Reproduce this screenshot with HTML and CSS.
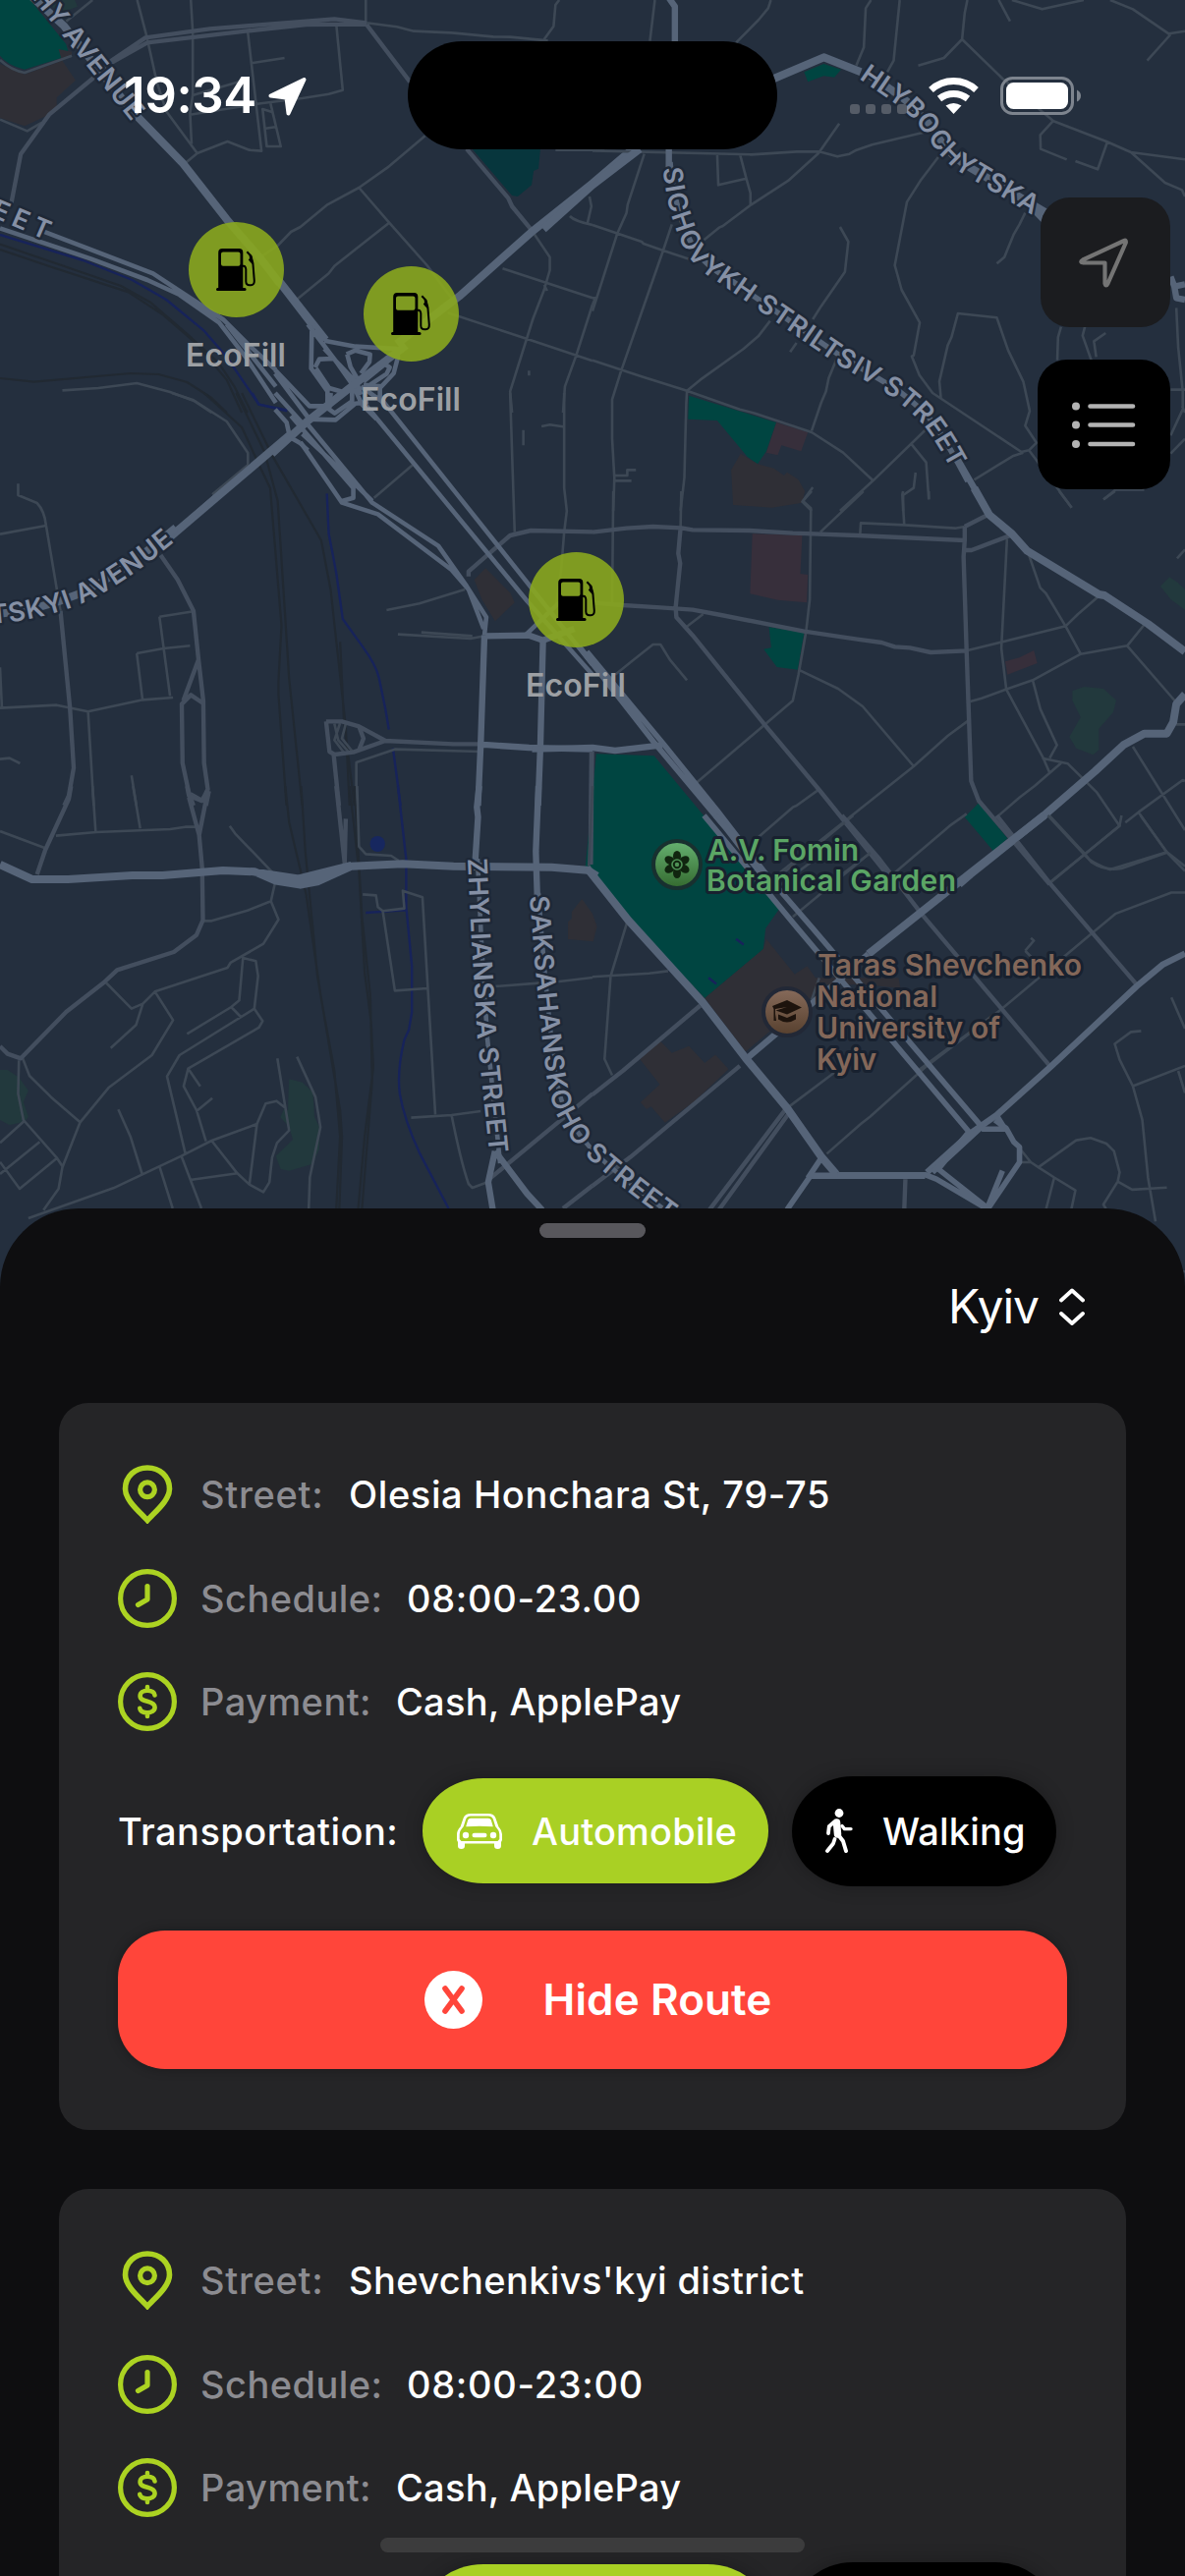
FILE: index.html
```html
<!DOCTYPE html>
<html lang="en">
<head>
<meta charset="utf-8">
<title>EcoFill</title>
<link rel="stylesheet" href="styles.css">
</head>
<body>
<svg width="0" height="0" class="defs">
  <defs>
    <symbol id="pump" viewBox="0 0 40 43">
      <path fill-rule="evenodd" d="M2.2 4Q2.2 0 6.2 0H23.5Q27.3 0 27.3 4V40H29Q30.6 40 30.6 41.5T29 43H1.5Q0 43 0 41.5T1.5 40H2.2ZM7 3.4Q5 3.4 5 5.4V15.7Q5 17.7 7 17.7H22.5Q24.5 17.7 24.5 15.7V5.4Q24.5 3.4 22.5 3.4Z"/>
      <path d="M27 17.8H28Q30 18 30.3 21V33.500Q30.400 37.200 34 37.200H35.300Q39 37.200 38.800 32.500L37.400 15L35.400 7.500L31.300 3.200" fill="none" stroke="#000" stroke-width="2"/>
      <path d="M33.500 5.500L36.500 8L38 17L34.500 13.500L32.800 11.500L34 10Z"/>
    </symbol>
    <symbol id="spot" viewBox="0 0 60 60">
      <g fill="none" stroke="#acd322" stroke-width="5.600"><path d="M30 56.500C23 48.500 7.500 36.500 7.500 24.500C7.500 11.500 17.500 3 30 3S52.500 11.500 52.500 24.500C52.500 36.500 37 48.500 30 56.500Z"/><circle cx="30" cy="25.300" r="7.400" stroke-width="5.200"/></g>
    </symbol>
    <symbol id="clock" viewBox="0 0 60 60">
      <g fill="none" stroke="#acd322" stroke-width="5.200" stroke-linecap="round" stroke-linejoin="round"><circle cx="30" cy="30" r="27.400"/><path d="M30 17.500V31L20.500 36.500"/></g>
    </symbol>
    <symbol id="dollar" viewBox="0 0 60 60">
      <g fill="none" stroke="#acd322" stroke-width="5.200" stroke-linecap="round" stroke-linejoin="round"><circle cx="30" cy="30" r="27.400"/><path d="M37.500 23.500C37 20 33.500 18.800 30 18.800C26 18.800 22.600 20.800 22.600 24.200C22.600 27.800 26 28.700 30 29.700S37.600 32 37.600 35.800C37.600 39.500 34 41.200 30 41.200S22.800 40 22.300 36.800M30 15V18M30 42V45" stroke-width="4.600"/></g>
    </symbol>
    <symbol id="car" viewBox="0 0 46 36">
      <path fill="#fff" fill-rule="evenodd" d="M14 0H32Q37.500 0 39.200 4L42.500 13.500Q46 17 46 21V27L45 29V33Q45 36 41.500 36T38 33V30.500H8V33Q8 36 4.500 36T1 33V29L0 27V21Q0 17 3.500 13.500L6.800 4Q8.500 0 14 0ZM14 2.500Q10.500 2.500 9.200 5.500L6.800 13L4.500 16Q2.700 18 2.700 21V26L4.500 28H41.500L43.300 26V21Q43.300 18 41.500 16L39.200 13L36.800 5.500Q35.500 2.500 32 2.500Z"/>
      <path fill="#fff" d="M14 4.800H32Q34 4.800 34.800 6.500L36.800 13.200Q23 12.200 9.200 13.200L11.200 6.500Q12 4.800 14 4.800Z"/><circle cx="9" cy="22" r="3.200" fill="#fff"/><circle cx="37" cy="22" r="3.200" fill="#fff"/><rect x="15.500" y="19.700" width="15" height="4.600" rx="2.300" fill="#fff"/>
    </symbol>
    <symbol id="walk" viewBox="0 0 28 45">
      <g stroke="#fff" stroke-linecap="round" stroke-linejoin="round" fill="none"><circle cx="14" cy="4.500" r="4.400" fill="#fff" stroke="none"/><path d="M11.500 14L12.500 26" stroke-width="7.500"/><path d="M9 13.500L3.800 18L3 25" stroke-width="3.800"/><path d="M13 26.500L18 33L21 43" stroke-width="4"/><path d="M9.500 31L8 35.500L2 43" stroke-width="3.800"/><path d="M17 17.500L19.500 20.600H26" stroke-width="3.400"/></g>
    </symbol>
    <linearGradient id="leaf" x2="0" y2="1"><stop stop-color="#66b171"/><stop offset="1" stop-color="#34692f"/></linearGradient>
    <linearGradient id="clay" x2="0" y2="1"><stop stop-color="#876b5b"/><stop offset="1" stop-color="#57402e"/></linearGradient>
    <path id="lane-hly" d="M874 80L912 106Q932 122 945 141Q958 162 975 174L1066 228"/>
    <path id="lane-sich" d="M675 171Q678 213 694 248Q703 272 735 290L848 368L905 402Q932 422 944 438Q957 456 978 496"/>
    <path id="lane-tsk" d="M-9 635Q40 632 84 614Q125 596 184 546"/>
    <path id="lane-ave" d="M32 -3L142 134"/>
    <path id="lane-eet" d="M-10 220L64 252"/>
    <path id="lane-zhy" d="M476 874L480 960L486 1057L499 1184"/>
    <path id="lane-sak" d="M539 912Q546 1010 555 1085C560 1135 576 1155 600 1180Q640 1216 710 1265"/>
  </defs>
</svg>

<main class="screen">
  <svg class="map" viewBox="0 0 1206 1420" width="1206" height="1420">
    <rect width="1206" height="1420" fill="#242f3e"/>

    <!-- north-west -->
    <g class="tile" transform="matrix(.38457 0 0 .33333 0 0)">
      <path class="teal" d="M0 0H80L175 135L180 155L160 178L65 212Q20 200 0 170Z"/>
      <path class="brown" d="M0 195L65 227L165 185L200 245L150 298V340L65 385L0 360ZM155 150L190 158V170L162 178Z"/>
      <path class="moss" d="M115 0H198L205 20L160 40Z"/>
      <path class="pine" d="M1250 455H1430L1425 515L1412 522L1407 565L1370 600L1355 597Z"/>
      <path class="rail" d="M0 746L140 801L320 873L400 925L500 1025L580 1110L620 1180L655 1260M0 762L140 817L340 892L430 960L520 1050L600 1160L640 1260M0 1155L90 1166L345 1140L420 1143L495 1167L560 1215L600 1260"/>
      <path class="river" d="M0 717L220 795L350 855L440 915L540 1010L600 1090L685 1235L760 1255"/>
      <path class="minor" d="M363 0L388 110L415 250L440 340L522 468L485 503M505 0L510 95V290L503 345L507 440M522 468L602 432L660 458L692 461L655 90M665 193L753 177M512 290L632 250M503 350L690 316L800 300L870 287L907 275L890 75M716 316L743 447H706L695 333L720 342M703 392L728 388M968 70V0M970 70L1050 82L1095 95L1195 100L1305 112L1350 113L1450 124M1440 120L1465 80L1470 15L1480 0M1125 415L1025 512L950 573L865 626L795 693L770 708L735 750L690 785M950 573L1030 680L1130 810L1195 910M1030 680L885 812L870 835L785 915M245 0L175 65M0 183Q30 215 65 222L190 170M0 365L72 400L110 375M1330 820L1568 910M1185 955L1395 1035L1568 1102M1405 700L1455 785V825L1440 885L1410 975L1350 1195L1355 1260M1568 930L1525 1085L1495 1180L1490 1260M1400 1132V1147M1440 870L1448 888M1508 660Q1520 675 1568 687M1560 600L1565 630L1555 680M165 1192L260 1185L362 1170L450 1197L515 1225L560 1260M1470 458H1600"/>
      <path class="mid" d="M282 195L385 115L555 88L885 58L970 70M282 200L390 130L650 95L810 75L970 74M282 200L245 240L130 350L55 470L30 620M970 75L1085 250M1235 455L1345 605L1355 630L1405 700"/>
      <path class="main w8" d="M75 -20L170 80L350 340L485 500L600 670L690 790L740 865"/>
      <path class="main" d="M730 855L830 1005M742 855L865 1035"/>
      <path class="main w9" d="M1700 430L1568 560L1405 710L1215 905L1050 1050"/>
      <path class="main" d="M0 697L240 790L390 855L475 900L580 985L650 1090L730 1230M100 700L405 835L510 915L590 975L655 1050L730 1130M600 990L730 1180"/>
    </g>

    <!-- north-east -->
    <g class="tile" transform="matrix(.38457 0 0 .33333 603 0)">
      <path class="teal" d="M560 220L612 195L658 212L640 236L612 232L570 250ZM255 1208L486 1290L460 1378L437 1417L410 1395L330 1284L253 1280Z"/>
      <path class="plum" d="M487 1290L570 1320L552 1378L500 1360L490 1390L460 1382Z"/>
      <path class="brown" d="M392 1385L437 1417L480 1430L507 1452L515 1442L545 1465L562 1500L555 1535L475 1550L372 1542L367 1435Z"/>
      <path class="minor" d="M165 0L152 125M472 0L465 25L440 60L380 130M737 0L723 25L718 145L698 200M813 0L797 185L780 220M992 0L985 40L978 120L930 177L862 200M978 120L1085 240L1220 370L1360 432L1425 465L1568 487M1075 0L1105 65M1110 0L1190 28L1300 0M1370 0L1430 28L1525 103L1568 95M1530 105L1468 185M1425 465L1515 558L1560 580L1568 600M1220 368L1185 412L1186 455L1255 487M1362 435L1337 517L1278 492M0 460L420 472L540 463L600 463L648 478L680 470L695 460L740 442L885 402M653 377L598 468L520 550L420 625L345 690L335 695L295 733M330 470L333 565L407 545L390 470M407 545L418 590V625M137 470L93 625L90 650L65 715L25 860L0 950M210 685L187 765L75 1135L52 1220V1340L58 1460L55 1560M0 687L130 738L135 744L187 765L260 793M915 480L870 548L832 617L800 810L818 885L866 985L850 1085L845 1088L865 1145L900 1200L1135 1380L1155 1375L1175 1352L1145 1300L1157 1255L1140 1165L1100 1070L1070 970L967 957L950 1030L940 1055L918 1165L922 1215M655 693L677 738L668 830L605 935L583 975M470 980L440 1025L400 1065L285 1160L250 1193L248 1235L243 1460L233 1560M0 1100L130 1150L250 1193L390 1250L430 1262L580 1320L663 1382L742 1467M540 1047L523 1075M650 1085L625 1155L618 1195L605 1230L580 1315M888 1305L745 1465L655 1560M843 1355L883 1412L890 1525M855 1443L850 1490L822 1512V1560M1010 1465L1112 1393L1140 1382M1155 1375L1230 1490L1268 1550M1145 650L1130 685L1115 715L1090 785L1070 805M1240 998L1232 1030L1230 1100M1303 998L1297 1025L1320 1100M1358 1017L1327 1042L1333 1090M1545 940L1550 1060L1562 1195V1250L1530 1330M1530 1190H1568M1560 1240L1568 1260M1530 1385L1568 1340M1353 1525L1385 1495H1460M60 1452H92V1435H115M60 1468H103M583 1488L555 1532L580 1560M0 910H8L0 930"/>
      <path class="main w7" d="M200 -10L218 20V130M202 455V515M965 1400L1050 1570"/>
      <path class="main w9" d="M480 240L612 175L710 220M-130 700L0 565L125 455M1170 640L1195 670"/>
      <path class="main w7" d="M1530 845L1540 875L1568 868M1540 875L1545 910L1568 915"/>
    </g>

    <!-- west -->
    <g class="tile" transform="matrix(.38457 0 0 .33333 0 400)">
      <path class="brown" d="M1285 535L1255 570L1275 630L1310 697L1362 640L1350 610Z"/>
      <path class="rail" d="M540 0L640 105L690 230L715 290L745 710L737 880V920L758 1260M625 0L700 180L735 330L765 870L800 1260M640 0L720 190L850 450L875 600L915 1020L925 1260M900 760L910 1000L938 1260"/>
      <path class="river" d="M668 0L685 35L760 52M865 307L870 430L890 550L907 690L960 775Q995 830 1003 870L1020 965L1029 1028M1040 1085L1060 1260"/>
      <path class="minor" d="M455 0L512 22L600 87L656 183V220L562 310M48 277V312L98 336Q118 360 122 405L160 665M0 431L122 405M422 683L512 667M422 683L450 925M362 795L433 780L503 772M362 795L377 935M0 962L150 953L233 973L378 937L458 930M233 973L240 1105L248 1260M0 838L5 960M0 1118L25 1115L53 1131M348 1168L361 1260M990 320L1092 220M1023 663L1110 643L1230 600M1053 737L1245 750L1283 742M1115 731L1250 742M1350 0L1355 180L1362 425M1493 0V290L1500 360L1493 425L1485 540L1470 660M1433 102L1455 97L1490 103M1385 113V160M943 1260V1128L1045 1088L1270 1095M885 1010L895 1060L922 1095M900 1008L885 1060L910 1098M915 1010L905 1055L935 1098"/>
      <path class="mid" d="M425 495L470 570L512 665L525 810L538 940L540 1130L550 1210L535 1245L500 1222L483 1130L481 950L505 922L538 948M525 815L485 940M160 665L185 960L195 1145L182 1230L170 1260M500 1222L512 1260M553 1215L545 1260M863 1003H905L950 1018L1020 1062L1200 1072H1270M863 1003L872 1095L885 1104L935 1097L1020 1062M950 1018L962 1055L950 1090M883 1104L897 1260M1240 560V545L1350 435L1405 420L1568 424"/>
      <path class="main w9" d="M765 130L450 440"/>
      <path class="main" d="M765 130L570 315L450 437M810 90L985 335L1160 467L1235 590L1287 685L1282 740M795 150L905 335L1000 370L1195 540L1240 600L1280 720M770 70L935 290V320L905 330M800 125L870 200L985 330M970 40L1395 635L1568 860M1010 20L1210 310L1568 830M1390 740L1480 640M1440 750L1435 760"/>
      <path class="main w7" d="M1282 740L1272 1075L1265 1260M1285 742L1400 740L1437 755L1430 1080L1424 1260M1437 755L1520 720M1270 1073L1400 1083L1568 1088"/>
    </g>

    <!-- interchange -->
    <g class="tile" transform="matrix(.33333 0 0 .33333 280 330)">
      <path class="main" d="M100 0L240 185M120 0L150 50M112 20L110 135L160 205V250M122 132L135 107L180 105L240 190M125 135L165 195L210 208M150 50L245 68L370 75L375 100L362 150L320 195V230M218 92L245 80L290 92L288 115L262 150M220 92L230 130L250 165M150 75L250 180L262 215M270 175L335 122L350 132L340 152L290 185M170 210L165 260L182 272L235 235V195M100 290L185 292L245 242L285 238M270 185L325 190M0 140L105 250H155L200 212M0 150L112 300M0 210L90 310M0 260L35 300L45 345L75 362M75 362L100 385M240 190L265 245L310 290M262 190L325 235L345 260"/>
      <path class="main w9" d="M400 65L240 185L100 295L-10 395"/>
    </g>

    <!-- east -->
    <g class="tile" transform="matrix(.38457 0 0 .33333 603 500)">
      <path class="plum" d="M423 130L555 135L550 252L570 255L567 340L490 332L417 313ZM1092 520L1130 508L1168 486L1177 525L1098 560Z"/>
      <path class="teal" d="M467 415L560 432L543 545L488 537L453 482L473 478ZM1022 952L1098 1060L1062 1100L985 995ZM10 802L163 808L330 1040L495 1274L458 1335L452 1398L297 1548L-20 1160Z"/>
      <path class="moss" d="M1270 610L1300 597L1352 603L1386 638L1378 675L1340 725V790L1325 805L1280 785L1262 750L1292 690L1270 640ZM1527 262L1550 280L1568 300V362L1530 330L1503 290Z"/>
      <path class="minor" d="M55 0L52 350M235 0L233 110M580 0L557 30L578 52L575 330L565 430L545 560L530 640L275 890M717 0L603 125M708 135L710 97L825 103L960 113L985 108M822 0L820 10L825 103M890 0V25M1235 0L1268 50M1383 0L1352 25M1097 145L1082 480L1095 605L1193 815L1210 860M1155 195L1185 295L1200 312L1252 412L1292 497L1415 472L1545 645M1340 320L1285 375L1252 412L990 487M1460 408L1415 472M1568 178L1547 205M1292 497L1165 577L1090 607L1030 632L1000 642M1165 577L1185 665L1229 775L1210 815M1190 815L1258 832L1335 920L1395 1022L1210 1195M1240 830L1170 900L1130 935L1065 1000M545 545L650 603L715 657L850 840M995 700L940 747L850 840L667 1008L490 1170M60 560L105 518L160 468H180L205 515L250 577M293 375L248 415M600 910L540 960L530 965L440 1055M990 985L945 1022L800 1165M735 1105L660 1170M1205 985L1305 1110L1320 1132Q1355 1160 1400 1152L1520 1103M1430 780L1568 1035M1410 1012L1445 980L1562 882L1568 885M1445 980L1520 1103L1568 1160M1545 712H1568"/>
      <path class="mid" d="M0 125L90 113L160 108L235 112L265 118L415 120L530 128L700 135L985 150M233 112L227 190L232 220L220 355L222 385L265 440L455 712L600 912L667 1008L800 1200M985 108V150L982 200L990 490L1002 885L1022 945L1210 1200M985 180H1003L1110 133M985 108L1050 70M0 340L80 348L180 355L265 362L340 378L560 428L700 452L765 462L800 475L840 478L895 492L990 487"/>
      <path class="main w9" d="M1010 -10L1050 72L1110 130L1150 182L1340 315L1355 318L1470 405L1568 490M1568 620L1545 650L1537 705L1520 740H1460L1405 775L1330 855L1200 985L1000 1170L970 1200"/>
      <path class="main w55" d="M-35 475L165 770L350 1025L460 1190M-15 490L190 775L330 975L480 1200"/>
      <path class="main w7" d="M-160 788L0 783L60 792L185 775"/>
      <path class="main w5" d="M-2 795L-5 1140"/>
    </g>

    <!-- south-west -->
    <g class="tile" transform="matrix(.38457 0 0 .33333 0 800)">
      <path class="moss" d="M0 867H20L50 890L75 930L62 965L75 1010L65 1025L25 1035L0 1020ZM765 895L800 905L828 935L832 1010L845 1040V1110L825 1155L765 1175L743 1170L730 1130L775 1080L765 1040L742 1012L752 985L762 990Z"/>
      <path class="brown" d="M1540 345L1513 385V405L1503 415V468L1570 475L1580 430L1568 390Z"/>
      <path class="rail" d="M755 0L765 110L810 330L850 650L885 870L900 1070L890 1290M797 0L808 200L840 580L900 990L905 1070L898 1290M925 0L950 260L965 570L982 720L988 860L965 1070L948 1290M938 0L958 400L980 640L985 900L958 1290"/>
      <path class="river" d="M1053 0L1075 225V370L1090 550V690L1082 745L1070 775Q1050 870 1058 940Q1070 1020 1110 1120L1187 1290M968 387L1073 379"/>
      <ellipse cx="999" cy="177" rx="20" ry="24" fill="#17275f"/>
      <path class="minor" d="M245 0L253 138M352 0L371 130M148 152L255 141L450 132L490 125H525M0 138L118 189M608 122L622 145L722 265M727 300L717 352L737 408L697 482L610 540L602 555L410 628L458 715L402 822L287 922L212 1027L165 1165L155 1230L115 1295M717 352L655 380L560 412H540M280 600L348 680L378 665L410 628M378 665L360 730L293 800M643 525L677 535L683 580L673 680L695 718L685 738L498 863L486 917L520 990L545 1085M643 525L633 655L612 675L495 757M612 675L637 705M673 680L475 822L442 887L490 1120M498 863L530 917M520 993L562 953M60 832L78 885L135 950L212 1027M50 838L48 940L62 1020L150 1135L167 1165M62 1025L0 1090M105 1087L0 1185M150 1137L52 1230L0 1148M313 988L345 1070L377 1188M75 1320L300 1228L480 1130L560 1083L680 1032L703 970L732 962L757 985M734 832L765 1052L733 1090L720 1135L713 1210L697 1240L660 1217L680 1032M560 1083L628 1183L660 1217M628 1183L503 1203M480 1130L533 1290M423 1165L457 1290M786 827L835 950L848 1042L820 1195L817 1290M945 0L950 185L968 208L1035 213L1055 228M960 331L995 334L1000 370L1013 382L1070 374L1066 320L1118 340L1152 1003M1013 382L1045 625L1130 618M1088 1013L1195 1005L1272 993M1195 1005Q1220 1150 1240 1215L1250 1227L1285 1212M1310 612L1425 602L1475 598L1568 585M1568 0L1558 245"/>
      <path class="mid" d="M188 0L182 40L120 195L98 270M495 0L500 30L533 45L553 15M500 35L527 150L550 15M527 150L535 250L537 410L520 455L460 507L310 562L275 600L175 690L55 832L20 818L0 795M890 0L912 235M1568 940L1290 1205M1568 1220L1490 1290M915 100L912 240"/>
      <path class="main w8" d="M0 240L85 285H180L350 273H430L590 258L675 262L730 290L795 302L840 292L930 245L1065 238L1200 245L1460 248L1555 257L1580 275M670 262L790 283L930 243"/>
      <path class="main w7" d="M1268 0L1262 65L1265 95L1257 240M1425 0L1418 200L1422 345M1310 1115L1292 1210L1305 1300M1310 1115L1395 1245L1435 1295"/>
    </g>

    <!-- south-east -->
    <g class="tile" transform="matrix(.38457 0 0 .34438 603 830)">
      <path class="brown" d="M460 365L535 470L568 445L590 480L810 480L815 510L720 500L620 500L510 600L405 698L297 540L452 395ZM180 668L210 702L255 682L297 732L325 707L360 750L270 845L192 908L155 860L143 868L127 848L178 795L125 720ZM0 310L10 320L0 375Z"/>
      <path class="river" d="M380 365L400 382M307 480L328 498"/>
      <path class="minor" d="M93 310L48 475L32 720L52 768M0 477L150 467L200 460M690 0L440 230M735 110L530 300M660 70L480 220M1205 0L1305 120Q1320 140 1370 160L1520 108L1568 150M1400 0L1395 30L1210 200M1450 0L1520 108M1568 228H1532L1385 290L1320 350L1085 570L880 745L735 890L710 912L620 1000M600 480L580 545M640 760L515 865M860 755L1060 590M1145 400L1168 370L1160 362M1145 400L1180 440M1532 538L1568 630M1452 637L1425 640L1382 675L1395 722L1430 800L1455 900L1470 1070L1490 1200M1430 800L1568 740M1550 755L1568 820M1135 990L1160 1025L1180 1040L1280 960L1318 953L1360 970L1380 992L1395 1055L1390 1082L1352 1150L1360 1165M1390 1082L1428 1106L1520 1100M1130 1025H1160M1180 1040L1222 1070L1278 1108L1267 1165M1222 1070L1200 1165M1555 1348H1568"/>
      <path class="mid" d="M1070 0L1210 200L1440 500M660 0L760 130L870 290L1210 740M0 825L80 755L285 562M0 1095L100 1010L390 740M510 870L310 1165M520 880L335 1165M828 1075L825 1165"/>
      <path class="main w9" d="M-15 155L95 310L290 550L405 717L515 865L605 1008L645 1060M1195 0L1000 170L730 410"/>
      <path class="main w7" d="M730 410L650 490L410 717M1568 408L1510 440L1440 505L1215 740L1070 885L1000 940L885 1055M575 1065H880"/>
      <path class="main w55" d="M295 0L540 330L1000 940M325 0L580 330L1030 920M575 1068L515 1165M610 1005L570 1072M650 1062H880L910 1075L1040 1160M915 1045L1045 1160M1000 930L915 1045M1030 920L900 1055M1030 927H1092L1070 888M1065 900L1095 925L1115 965L1130 980V1025L1045 1165M1085 1050L1045 1160"/>
    </g>

    <g class="main">
      <use href="#lane-hly" class="w8" transform="translate(6 -7)"/>
      <use href="#lane-sich" class="w55" transform="translate(7 -6)"/>
      <use href="#lane-tsk" class="w8" transform="translate(-5 -9)"/>
      <use href="#lane-zhy" transform="translate(10 0)"/>
      <use href="#lane-sak" transform="translate(9 -3)"/>
    </g>

    <g class="street">
      <text><textPath href="#lane-ave" textLength="163">HY AVENUE</textPath></text>
      <text><textPath href="#lane-eet" textLength="62">EET</textPath></text>
      <text><textPath href="#lane-hly" textLength="227">HLYBOCHYTSKA</textPath></text>
      <text><textPath href="#lane-sich" textLength="443">SICHOVYKH STRILTSIV STREET</textPath></text>
      <text><textPath href="#lane-tsk" textLength="209">TSKYI AVENUE</textPath></text>
      <text><textPath href="#lane-zhy" textLength="301">ZHYLIANSKA STREET</textPath></text>
      <text><textPath href="#lane-sak" textLength="384">SAKSAHANSKOHO STREET</textPath></text>
    </g>

    <g class="poi poi-green">
      <text x="720" y="876" textLength="154">A.V. Fomin</text>
      <text x="719" y="907" textLength="254">Botanical Garden</text>
    </g>
    <circle cx="689" cy="880" r="24" fill="url(#leaf)" stroke="#18302f" stroke-width="4"/>
    <g fill="#10250f" transform="translate(689 880)">
      <ellipse cy="-8.500" rx="4" ry="5.500"/><ellipse cy="-8.500" rx="4" ry="5.500" transform="rotate(60)"/><ellipse cy="-8.500" rx="4" ry="5.500" transform="rotate(120)"/><ellipse cy="-8.500" rx="4" ry="5.500" transform="rotate(180)"/><ellipse cy="-8.500" rx="4" ry="5.500" transform="rotate(240)"/><ellipse cy="-8.500" rx="4" ry="5.500" transform="rotate(300)"/>
      <circle r="5" stroke="#4f9256" stroke-width="1.600"/><circle r="2.200" fill="#4f9256"/>
    </g>
    <g class="poi poi-brown">
      <text x="832" y="993" textLength="269">Taras Shevchenko</text>
      <text x="831" y="1025" textLength="123">National</text>
      <text x="831" y="1057" textLength="187">University of</text>
      <text x="831" y="1089" textLength="61">Kyiv</text>
    </g>
    <circle cx="801" cy="1030" r="24" fill="url(#clay)" stroke="#222836" stroke-width="4"/>
    <g fill="#1d130d" transform="translate(0 6)"><path d="M786 1018L801 1012L816 1019.500L801 1026.500L789.500 1022.500L801 1019L789 1021V1026L790 1033H787.500V1021ZM792 1026.500L801 1030L810 1026V1031.500Q801 1037.500 792 1031.500Z"/></g>
  </svg>

  <div class="pin pin-a"><span class="pin-dot"><svg><use href="#pump"/></svg></span><span>EcoFill</span></div>
  <div class="pin pin-b"><span class="pin-dot"><svg><use href="#pump"/></svg></span><span>EcoFill</span></div>
  <div class="pin pin-c"><span class="pin-dot"><svg><use href="#pump"/></svg></span><span>EcoFill</span></div>

  <header class="status">
    <span class="time">19:34</span>
    <svg class="loc" viewBox="0 0 39 39"><path d="M36.500 2L20.500 36.500L18.500 20.500L2.500 18.500Z" fill="#fff" stroke="#fff" stroke-width="4" stroke-linejoin="round"/></svg>
    <span class="island"></span>
    <span class="cell"><i></i><i></i><i></i><i></i></span>
    <svg class="wifi" viewBox="0 0 51 37"><g fill="none" stroke="#fff" stroke-width="7"><path d="M2.500 12.500Q12.500 3.500 25.500 3.500T48.500 12.500"/><path d="M11 21.500Q17.500 16.500 25.500 16.500T40 21.500"/></g><path d="M25.500 37L17.500 28.500Q25.500 23.500 33.500 28.500Z" fill="#fff"/></svg>
    <svg class="battery" viewBox="0 0 83 40"><rect x="1.500" y="1.500" width="72" height="36" rx="11" fill="none" stroke="#7d848e" stroke-width="3"/><rect x="6" y="6" width="63" height="27" rx="7.500" fill="#fff"/><path d="M78 13.500Q82 15.500 82 19.500T78 25.500Z" fill="#7d848e"/></svg>
  </header>

  <nav class="controls">
    <button class="control control-nav"><svg width="50" height="51" viewBox="0 0 50 51"><path d="M46 3L4 22.500Q.5 24.500 4 25.300L26.500 25.500V46.500Q27.500 50.500 29.500 46.500L47.800 5Q48.200 2 46 3Z" fill="none" stroke="#747474" stroke-width="4.200" stroke-linejoin="round"/></svg></button>
    <button class="control control-list"><svg width="65" height="47" viewBox="0 0 65 47"><g fill="#b3b3b3"><circle cx="4" cy="4.500" r="4"/><circle cx="4" cy="23.500" r="4"/><circle cx="4" cy="43" r="4"/></g><path d="M18.500 4.500H62M18.500 23.500H62M18.500 43H62" stroke="#b3b3b3" stroke-width="4.600" stroke-linecap="round"/></svg></button>
  </nav>

  <section class="sheet">
    <span class="grabber"></span>
    <div class="city"><span>Kyiv</span><svg width="26" height="38" viewBox="0 0 26 38"><path d="M2 12.500L13 2.500L24 12.500M2 26L13 36L24 26" fill="none" stroke="#fff" stroke-width="3.800" stroke-linecap="round" stroke-linejoin="round"/></svg></div>

    <article class="card">
      <div class="row"><svg><use href="#spot"/></svg><span class="label l-street">Street:</span><span class="v-a">Olesia Honchara St, 79-75</span></div>
      <div class="row"><svg><use href="#clock"/></svg><span class="label l-sched">Schedule:</span><span class="v-hours">08:00-23.00</span></div>
      <div class="row"><svg><use href="#dollar"/></svg><span class="label l-pay">Payment:</span><span class="v-pay">Cash, ApplePay</span></div>
      <div class="transport">
        <span class="t-label">Transportation:</span>
        <button class="pill auto"><svg><use href="#car"/></svg><span>Automobile</span></button>
        <button class="pill foot"><svg><use href="#walk"/></svg><span>Walking</span></button>
      </div>
      <button class="hide"><svg width="59" height="59" viewBox="0 0 59 59"><circle cx="29.500" cy="29.500" r="29.500" fill="#fff"/><path d="M21 18L38 41M38 18L21 41" stroke="#ff453a" stroke-width="5.600" stroke-linecap="round"/></svg><span>Hide Route</span></button>
    </article>

    <article class="card">
      <div class="row"><svg><use href="#spot"/></svg><span class="label l-street">Street:</span><span class="v-b">Shevchenkivs'kyi district</span></div>
      <div class="row"><svg><use href="#clock"/></svg><span class="label l-sched">Schedule:</span><span class="v-hours">08:00-23:00</span></div>
      <div class="row"><svg><use href="#dollar"/></svg><span class="label l-pay">Payment:</span><span class="v-pay">Cash, ApplePay</span></div>
      <div class="transport">
        <span></span>
        <button class="pill auto"></button>
        <button class="pill foot"></button>
      </div>
    </article>
  </section>
  <span class="home"></span>
</main>
</body>
</html>
```
FILE: styles.css
```css
* { box-sizing: border-box; }
body { margin: 0; background: #0e0e10; font-family: Inter, "Liberation Sans", sans-serif; color: #fff; }
button { border: 0; margin: 0; padding: 0; font: inherit; color: inherit; letter-spacing: inherit; }
.defs { position: absolute; }
.screen { position: relative; width: 1206px; height: 2622px; overflow: hidden; display: flex; flex-direction: column; }

/* map */
.map { position: absolute; top: 0; left: 0; }
.tile path { vector-effect: non-scaling-stroke; stroke-linejoin: round; }
.teal { fill: #004541; }
.pine { fill: #07363d; }
.moss { fill: #22393d; }
.brown { fill: #2f2f36; }
.plum { fill: #372f3b; }
.minor { fill: none; stroke: #3d4855; stroke-width: 2.6px; }
.mid { fill: none; stroke: #434e5e; stroke-width: 4.4px; }
.main { fill: none; stroke: #566478; stroke-width: 4.6px; }
.w5 { stroke-width: 5px; stroke: #434e5e; }
.w55 { stroke-width: 5.6px; }
.w7 { stroke-width: 6.4px; }
.w8 { stroke-width: 8px; }
.w9 { stroke-width: 8px; }
.river { fill: none; stroke: #17235a; stroke-width: 2.4px; }
.rail { fill: none; stroke: #212932; stroke-width: 2.2px; }
.street { font-size: 27px; font-weight: 600; fill: #8590a5; stroke: #1e2837; stroke-width: 5px; paint-order: stroke; stroke-linejoin: round; }
.poi { font-size: 30px; font-weight: 600; stroke: #18212f; stroke-width: 6px; paint-order: stroke; stroke-linejoin: round; }
.poi-green { fill: #5ba665; }
.poi-brown { fill: #836759; }

.pin { position: absolute; width: 120px; display: flex; flex-direction: column; align-items: center; gap: 20px; font-size: 32px; line-height: 38px; font-weight: 600; letter-spacing: .1px; color: #9da0a4; }
.pin-dot { width: 97px; height: 97px; border-radius: 50%; background: rgba(137, 167, 30, .9); display: grid; place-items: center; }
.pin-dot svg { width: 40px; height: 43px; }
.pin-a { left: 180px; top: 226px; }
.pin-b { left: 358px; top: 271px; }
.pin-c { left: 526px; top: 562px; }

/* status bar */
.status { position: relative; height: 201px; padding: 42px 105px 0 126px; display: flex; align-items: flex-start; }
.status > * { flex: none; }
.time { width: 147px; margin-top: 24px; font-size: 51px; line-height: 62px; font-weight: 600; letter-spacing: -.4px; }
.loc { width: 39px; height: 39px; margin-top: 37px; }
.island { width: 376px; height: 110px; margin-left: 103px; border-radius: 55px; background: #000; }
.cell { display: flex; gap: 6px; margin: 64px 0 0 74px; }
.cell i { width: 10px; height: 10px; border-radius: 3px; background: #555c67; }
.wifi { width: 51px; height: 37px; margin: 37px 0 0 22px; }
.battery { width: 83px; height: 40px; margin: 36px 0 0 22px; }

.controls { position: relative; height: 1029px; padding-right: 15px; display: flex; flex-direction: column; align-items: flex-end; gap: 33px; flex: none; }
.control { width: 132px; height: 132px; border-radius: 30px; display: grid; place-items: center; }
.control-nav { padding-right: 5px; background: #1b1c1f; }
.control-list { width: 135px; background: #000; }

/* sheet */
.sheet { position: relative; flex: none; width: 1206px; height: 1392px; padding: 15px 60px 0; border-radius: 80px 80px 0 0; background: #0e0e10; display: flex; flex-direction: column; }
.sheet > * { flex: none; }
.grabber { align-self: center; width: 108px; height: 15px; border-radius: 7.5px; background: #58575c; }
.city { height: 140px; margin: 0 42px 28px 0; display: flex; align-items: center; justify-content: flex-end; gap: 21px; font-size: 48px; line-height: 58px; letter-spacing: -1px; }
.card { height: 740px; margin-bottom: 60px; padding: 63px 60px 0; border-radius: 30px; background: #252527; display: flex; flex-direction: column; font-size: 38px; font-weight: 500; line-height: 46px; letter-spacing: .45px; }
.card > * { flex: none; }
.row { height: 60px; margin-bottom: 45.5px; display: flex; align-items: center; }
.row svg { width: 60px; height: 60px; margin-right: 24px; flex: none; }
.row span { white-space: nowrap; }
.label { color: #8c8c91; }
.l-street { width: 151px; letter-spacing: .7px; }
.l-sched { width: 210px; }
.l-pay { width: 199px; }
.v-a { letter-spacing: .6px; }
.v-b { letter-spacing: .38px; }
.v-hours { letter-spacing: .7px; }
.v-pay { letter-spacing: .25px; }
.transport { height: 112px; display: grid; grid-template-columns: 310px 352px 293px; align-items: center; }
.pill { display: flex; align-items: center; gap: 30px; letter-spacing: .2px; box-shadow: 0 0 18px rgba(0, 0, 0, .25); }
.auto { height: 107px; border-radius: 62px / 53px; padding-left: 35px; background: #a9d024; }
.auto svg { width: 46px; height: 36px; }
.foot { width: 269px; height: 112px; margin-left: 24px; border-radius: 62px / 56px; padding-left: 34px; background: #000; }
.foot svg { width: 28px; height: 45px; }
.hide { height: 141px; margin-top: 45px; padding-left: 11px; border-radius: 48px; background: #ff453a; display: flex; align-items: center; justify-content: center; gap: 62px; font-size: 44px; font-weight: 600; letter-spacing: .1px; box-shadow: 0 0 12px rgba(0, 0, 0, .3); }
.home { position: absolute; left: 387px; top: 2583px; width: 432px; height: 15px; border-radius: 7.5px; background: #3c3c3d; }
```
